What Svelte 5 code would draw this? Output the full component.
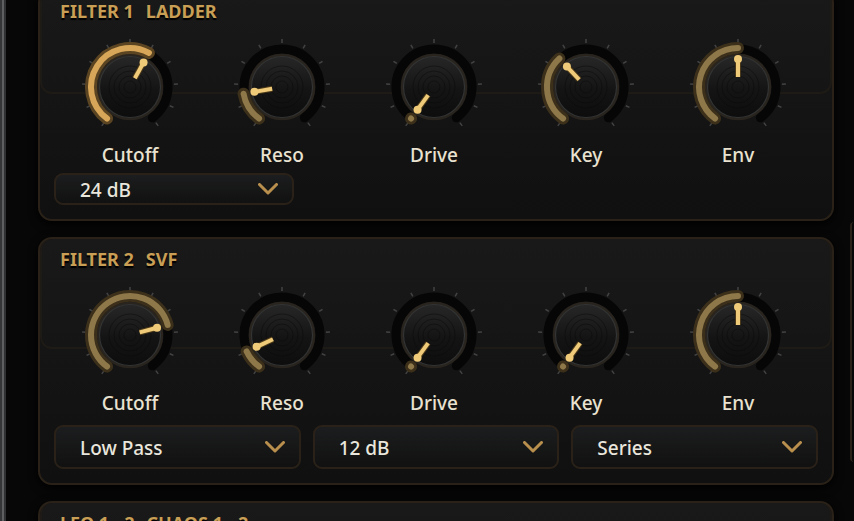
<script lang="ts">
	type Knob = { label: string; angle: number; live?: boolean };
	type Choice = { name: string; options: string[] };
	type Panel = { title: string; mode: string; compact?: boolean; knobs: Knob[]; choices: Choice[] };

	const slopes = ['24 dB', '12 dB'];

	const panels: Panel[] = [
		{
			title: 'FILTER 1',
			mode: 'LADDER',
			compact: true,
			knobs: [
				{ label: 'Cutoff', angle: 29, live: true },
				{ label: 'Reso', angle: -100 },
				{ label: 'Drive', angle: -144 },
				{ label: 'Key', angle: -43 },
				{ label: 'Env', angle: 0 },
			],
			choices: [{ name: 'Slope', options: slopes }],
		},
		{
			title: 'FILTER 2',
			mode: 'SVF',
			knobs: [
				{ label: 'Cutoff', angle: 75 },
				{ label: 'Reso', angle: -115 },
				{ label: 'Drive', angle: -144 },
				{ label: 'Key', angle: -144 },
				{ label: 'Env', angle: 0 },
			],
			choices: [
				{ name: 'Type', options: ['Low Pass', 'High Pass', 'Band Pass'] },
				{ name: 'Slope', options: ['12 dB', '24 dB'] },
				{ name: 'Routing', options: ['Series', 'Parallel'] },
			],
		},
	];

	// knobs travel 288 degrees, 0 is straight up
	const MIN = -144;
	const MAX = 144;
	const ticks = Array.from({ length: 11 }, (_, i) => MIN + i * 28.8);
	const rings = [6, 11, 16, 21];

	const rad = (deg: number) => (Math.PI / 180) * deg;
	const x = (deg: number, r: number) => r * Math.sin(rad(deg));
	const y = (deg: number, r: number) => -r * Math.cos(rad(deg));

	const arc = (start: number, end: number, r: number) => {
		const large = end - start > 180 ? 1 : 0;
		const stop = Math.max(end, start + 0.1);
		return `M ${x(start, r)} ${y(start, r)} A ${r} ${r} 0 ${large} 1 ${x(stop, r)} ${y(stop, r)}`;
	};

	const line = (deg: number, r1: number, r2: number) => ({
		x1: x(deg, r1),
		y1: y(deg, r1),
		x2: x(deg, r2),
		y2: y(deg, r2),
	});
</script>

<svg class="defs" width="0" height="0" aria-hidden="true">
	<linearGradient id="cap" x1="0" y1="0" x2="0" y2="1">
		<stop offset="0" stop-color="#272727" />
		<stop offset="0.55" stop-color="#141415" />
		<stop offset="1" stop-color="#0d0d0e" />
	</linearGradient>
</svg>

<div class="synth">
	<main>
		{#each panels as panel}
			<section class:compact={panel.compact}>
				<h2><span>{panel.title}</span><span>{panel.mode}</span></h2>
				<div class="knobs">
					{#each panel.knobs as knob}
						<div class="knob" class:live={knob.live}>
							<svg
								viewBox="-50 -50 100 100"
								role="slider"
								tabindex="0"
								aria-label={knob.label}
								aria-valuemin={MIN}
								aria-valuemax={MAX}
								aria-valuenow={knob.angle}
							>
								{#each ticks as tick}
									<line class="tick" {...line(tick, 44, 48)} />
								{/each}
								<path class="track" d={arc(MIN, MAX, 38)} />
								<circle class="rim" r="32" />
								<circle class="cap" r="30.5" />
								{#each rings as r}
									<circle class="ring" {r} />
								{/each}
								<path class="halo" d={arc(MIN, knob.angle, 39)} />
								<path class="value" d={arc(MIN, knob.angle, 39)} />
								<line class="shade" {...line(knob.angle, 10, 28)} />
								<line class="pointer" {...line(knob.angle, 10, 28)} />
								<circle class="tip" cx={x(knob.angle, 28)} cy={y(knob.angle, 28)} r="4" />
							</svg>
							<span>{knob.label}</span>
						</div>
					{/each}
				</div>
				<div class="choices">
					{#each panel.choices as choice}
						<div class="choice">
							<select aria-label={choice.name}>
								{#each choice.options as option}
									<option>{option}</option>
								{/each}
							</select>
							<svg class="chevron" viewBox="0 0 20 12" aria-hidden="true">
								<path d="M1.5 1.5 L10 10 L18.5 1.5" />
							</svg>
						</div>
					{/each}
				</div>
			</section>
		{/each}
		<section class="next">
			<h2><span>LFO 1&thinsp;–&thinsp;2</span><span>CHAOS 1&thinsp;–&thinsp;2</span></h2>
		</section>
	</main>
	<aside></aside>
</div>

<style>
	:global(body) {
		background: #070707;
		overflow: hidden;
	}
	.defs {
		position: absolute;
	}
	.synth {
		display: flex;
		height: 100vh;
		box-sizing: border-box;
		overflow: hidden;
		border-left: 2px solid #353637;
		color: #e9e2d0;
		font: 500 19px/24px 'Noto Sans', sans-serif;
		background: linear-gradient(90deg, #5e5f60 2px, #303132 2px 4px, #070707 4px);
	}
	main {
		flex: 1;
		display: flex;
		flex-direction: column;
		gap: 16px;
		margin: -11px 16px 0 36px;
	}
	section {
		position: relative;
		flex: none;
		box-sizing: border-box;
		padding: 10px 14px 14px;
		border: 2px solid #2a2218;
		border-radius: 14px;
		background: linear-gradient(#191919, #101010);
		box-shadow: 0 3px 10px #000;
	}
	section::before {
		content: '';
		position: absolute;
		inset: 0 0 55%;
		border: 2px solid #1e1a16;
		border-top: 0;
		border-radius: 12px;
	}
	h2 {
		display: flex;
		gap: 12px;
		margin: 0 6px;
		color: #c89f55;
		font-size: 18px;
		font-weight: 700;
		line-height: 20px;
		text-shadow: 0 2px 1px #000;
	}
	.knobs {
		position: relative;
		display: grid;
		grid-template-columns: repeat(5, 1fr);
		margin-top: 16px;
		padding-right: 4px;
	}
	.knob {
		display: flex;
		flex-direction: column;
		align-items: center;
		gap: 6px;
	}
	.knob svg {
		width: 100px;
		height: 100px;
	}
	.tick {
		stroke: #434343;
		stroke-width: 1.5;
	}
	.track {
		fill: none;
		stroke: #060606;
		stroke-width: 9;
		stroke-linecap: round;
	}
	.rim {
		fill: #111;
		stroke: #29241e;
		stroke-width: 2.5;
	}
	.cap {
		fill: url(#cap);
		stroke: #333434;
		stroke-width: 1.2;
	}
	.ring {
		fill: none;
		stroke: #0a0a0a;
		stroke-opacity: 0.5;
	}
	.halo,
	.value {
		fill: none;
		stroke-linecap: round;
	}
	.halo {
		stroke: #3c301b;
		stroke-width: 12;
	}
	.value {
		stroke: #8e784a;
		stroke-width: 6;
	}
	.live .halo {
		stroke: #5b4421;
	}
	.live .value {
		stroke: #d8a658;
	}
	.shade {
		stroke: #4a3818;
		stroke-width: 6;
	}
	.pointer {
		stroke: #efca79;
		stroke-width: 4;
	}
	.tip {
		fill: #efca79;
	}
	.choices {
		position: relative;
		display: grid;
		grid-template-columns: repeat(3, 1fr);
		gap: 12px;
		margin-top: 10px;
	}
	.choice {
		position: relative;
	}
	select {
		appearance: none;
		display: block;
		width: 100%;
		height: 44px;
		padding: 2px 44px 0 24px;
		border: 2px solid #2a2219;
		border-radius: 9px;
		background: linear-gradient(#1c1d1e, #111);
		color: #e9e6dc;
		font: inherit;
	}
	.chevron {
		position: absolute;
		top: 50%;
		right: 16px;
		width: 20px;
		height: 12px;
		translate: 0 -50%;
		pointer-events: none;
	}
	.chevron path {
		fill: none;
		stroke: #b98f4d;
		stroke-width: 3;
		stroke-linecap: round;
		stroke-linejoin: round;
	}
	.compact .choices {
		grid-template-columns: 240px;
		margin-top: 6px;
	}
	.compact select {
		height: 32px;
	}
	.next {
		height: 248px;
	}
	aside {
		flex: none;
		width: 4px;
		height: 240px;
		margin-top: 222px;
		box-sizing: border-box;
		border-left: 2px solid #2a2218;
		border-radius: 14px 0 0 14px;
	}
</style>
